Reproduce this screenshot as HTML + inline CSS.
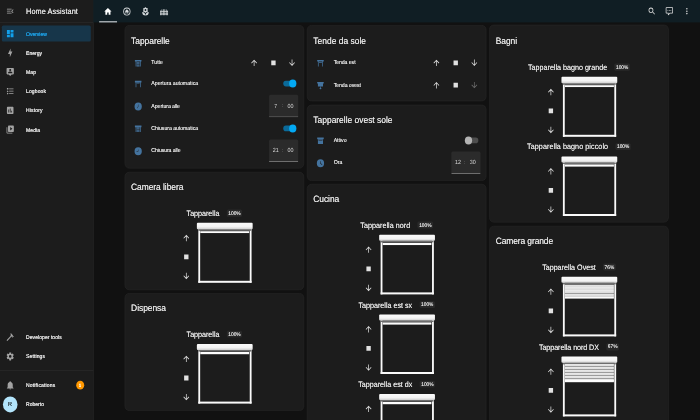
<!DOCTYPE html>
<html lang="it"><head><meta charset="utf-8"><title>Home Assistant</title>
<style>
html,body{margin:0;padding:0;background:#111111;overflow:hidden;width:700px;height:420px}
#c{position:absolute;left:0;top:0;width:1920px;height:1050px;transform-origin:0 0;transform:scale(0.3645833,0.4);overflow:hidden;filter:brightness(1);
 font-family:"Liberation Sans",sans-serif;text-rendering:geometricPrecision;}
#c>*{position:absolute;box-sizing:border-box}
.ic{display:block}
.t{white-space:nowrap;text-shadow:0 0 1px currentColor}
.thin{text-shadow:none}
.med{-webkit-text-stroke:0.25px currentColor}
.sidebar{left:0;top:0;width:256px;height:1050px;background:rgba(28,28,28,.996);border-right:1px solid #363636}
.sb-head{left:0;top:0;width:255px;height:56px;border-bottom:1px solid #363636}
.sel{background:rgba(23,54,74,.996);border-radius:4px}
.divider{height:1px;background:#363636}
.badge{border-radius:50%;background:#ff9800}
.avatar{border-radius:50%;background:#b3e5fc}
.header{left:256px;top:0;width:1664px;height:56px;background:rgba(16,30,36,.996)}
.ind{background:#c4c9cc}
.card{background:rgba(28,28,28,.996);border:1px solid #313131;border-radius:12px}
.track{width:34px;height:14px;border-radius:7px;background:#4d4d4d}
.track.on{background:#0b6a99}
.thumb{width:20px;height:20px;border-radius:50%;background:#b4b4b4}
.thumb.on{background:#03a9f4}
.timebox{width:80px;height:56px;background:rgba(255,255,255,.065);border-bottom:2.5px solid #a0a0a0;border-radius:4px 4px 0 0}
.lblrow{text-shadow:0 0 0.5px currentColor;height:40px;line-height:40px;text-align:center;white-space:nowrap;color:#e1e1e1;font-size:19.6px}
.lbl{display:inline-block;vertical-align:middle;line-height:40px}
.pct{display:inline-block;vertical-align:middle;margin-left:20px;font-size:13.2px;line-height:17.5px;height:17.5px;padding:0 4.3px;background:rgba(255,255,255,.06);border-radius:4px;color:#e1e1e1;position:relative;top:-1px}
.pic{width:153px;height:151px}
.pic>*{position:absolute;box-sizing:border-box}
.bar{left:0;top:0;width:153px;height:15.5px;border-radius:2.5px;background:linear-gradient(#fbfbfb 0,#f4f4f4 62%,#cfcfcf 100%)}
.shade{left:4px;top:15px;width:145px;height:4.5px;background:#6e6e6e}
.frame{left:3.6px;top:14px;width:146px;height:135.5px;border:5.2px solid #fafafa;border-bottom-width:5.8px;border-top:0}
.slide{left:9px;top:19px;width:135px;overflow:hidden}
.slats{position:absolute;left:0;top:0;width:135px;background:repeating-linear-gradient(#e9e9e9 0,#dcdcdc 5.6px,#9c9c9c 5.6px,#9c9c9c 7.6px)}
.handle{position:absolute;left:0;bottom:0;width:135px;height:5.5px;background:#fcfcfc}
</style></head>
<body><div id="c">
<div class="sidebar"></div>
<div class="sb-head"></div>
<svg class="ic" style="left:16.0px;top:16.0px;width:24px;height:24px;" viewBox="0 0 24 24"><path fill="#a8a8a8" d="M21,15.61L19.59,17L14.58,12L19.59,7L21,8.39L17.44,12L21,15.61M3,6H16V8H3V6M3,13V11H13V13H3M3,18V16H16V18H3Z"/></svg>
<div class="t " style="left:71.5px;top:8.5px;height:40px;line-height:40px;font-size:20.2px;color:#e1e1e1;letter-spacing:0.14px;text-shadow:0 0 0.5px currentColor;">Home Assistant</div>
<div class="sel" style="left:5px;top:64px;width:244px;height:40px"></div>
<svg class="ic" style="left:16.0px;top:72.0px;width:24px;height:24px;" viewBox="0 0 24 24"><path fill="#12a0ea" d="M13,3V9H21V3M13,21H21V11H13M3,21H11V15H3M3,13H11V3H3V13Z"/></svg>
<div class="t med" style="left:71.5px;top:70.5px;height:28px;line-height:28px;font-size:13.8px;color:#1ea1e6;letter-spacing:-0.09px;">Overview</div>
<svg class="ic" style="left:16.0px;top:120.0px;width:24px;height:24px;" viewBox="0 0 24 24"><path fill="#a3a3a3" d="M11,15H6L13,1V9H18L11,23V15Z"/></svg>
<div class="t med" style="left:71.5px;top:118.5px;height:28px;line-height:28px;font-size:13.8px;color:#e1e1e1;letter-spacing:-0.04px;">Energy</div>
<svg class="ic" style="left:16.0px;top:168.0px;width:24px;height:24px;" viewBox="0 0 24 24"><path fill="#a3a3a3" d="M20,2H4A2,2 0 0,0 2,4V16A2,2 0 0,0 4,18H8L12,22L16,18H20A2,2 0 0,0 22,16V4A2,2 0 0,0 20,2M12,4.3C13.5,4.3 14.7,5.5 14.7,7C14.7,8.5 13.5,9.7 12,9.7C10.5,9.7 9.3,8.5 9.3,7C9.3,5.5 10.5,4.3 12,4.3M18,15H6V14.1C6,12.1 10,11 12,11C14,11 18,12.1 18,14.1V15Z"/></svg>
<div class="t med" style="left:71.5px;top:166.5px;height:28px;line-height:28px;font-size:13.8px;color:#e1e1e1;letter-spacing:0.18px;">Map</div>
<svg class="ic" style="left:16.0px;top:216.0px;width:24px;height:24px;" viewBox="0 0 24 24"><path fill="#a3a3a3" d="M5,9.5L7.5,14H2.5L5,9.5M3,4H7V8H3V4M5,20A2,2 0 0,0 7,18A2,2 0 0,0 5,16A2,2 0 0,0 3,18A2,2 0 0,0 5,20M9,5V7H21V5H9M9,19H21V17H9V19M9,13H21V11H9V13Z"/></svg>
<div class="t med" style="left:71.5px;top:214.5px;height:28px;line-height:28px;font-size:13.8px;color:#e1e1e1;letter-spacing:0.28px;">Logbook</div>
<svg class="ic" style="left:16.0px;top:264.0px;width:24px;height:24px;" viewBox="0 0 24 24"><path fill="#a3a3a3" d="M17,17H15V13H17M13,17H11V7H13M9,17H7V10H9M19,3H5C3.89,3 3,3.89 3,5V19A2,2 0 0,0 5,21H19A2,2 0 0,0 21,19V5C21,3.89 20.1,3 19,3Z"/></svg>
<div class="t med" style="left:71.5px;top:262.5px;height:28px;line-height:28px;font-size:13.8px;color:#e1e1e1;letter-spacing:0.34px;">History</div>
<svg class="ic" style="left:16.0px;top:312.0px;width:24px;height:24px;" viewBox="0 0 24 24"><path fill="#a3a3a3" d="M4,6H2V20A2,2 0 0,0 4,22H18V20H4V6M20,2H8A2,2 0 0,0 6,4V16A2,2 0 0,0 8,18H20A2,2 0 0,0 22,16V4A2,2 0 0,0 20,2M12,14.5V5.5L18,10L12,14.5Z"/></svg>
<div class="t med" style="left:71.5px;top:310.5px;height:28px;line-height:28px;font-size:13.8px;color:#e1e1e1;letter-spacing:0.16px;">Media</div>
<svg class="ic" style="left:16.0px;top:830.5px;width:24px;height:24px;" viewBox="0 0 24 24"><path fill="#a3a3a3" d="M2,19.63L13.43,8.2L12.72,7.5L14.14,6.07L12,3.89C13.2,2.7 15.09,2.7 16.27,3.89L19.87,7.5L18.45,8.91H21.29L22,9.62L18.45,13.21L17.74,12.5V9.62L16.27,11.04L15.56,10.33L4.13,21.76L2,19.63Z"/></svg>
<div class="t med" style="left:71.5px;top:829.0px;height:28px;line-height:28px;font-size:13.8px;color:#e1e1e1;letter-spacing:0.14px;">Developer tools</div>
<svg class="ic" style="left:16.0px;top:878.5px;width:24px;height:24px;" viewBox="0 0 24 24"><path fill="#a3a3a3" d="M12,15.5A3.5,3.5 0 0,1 8.5,12A3.5,3.5 0 0,1 12,8.5A3.5,3.5 0 0,1 15.5,12A3.5,3.5 0 0,1 12,15.5M19.43,12.97C19.47,12.65 19.5,12.33 19.5,12C19.5,11.67 19.47,11.34 19.43,11L21.54,9.37C21.73,9.22 21.78,8.95 21.66,8.73L19.66,5.27C19.54,5.05 19.27,4.96 19.05,5.05L16.56,6.05C16.04,5.66 15.5,5.32 14.87,5.07L14.5,2.42C14.46,2.18 14.25,2 14,2H10C9.75,2 9.54,2.18 9.5,2.42L9.13,5.07C8.5,5.32 7.96,5.66 7.44,6.05L4.95,5.05C4.73,4.96 4.46,5.05 4.34,5.27L2.34,8.73C2.21,8.95 2.27,9.22 2.46,9.37L4.57,11C4.53,11.34 4.5,11.67 4.5,12C4.5,12.33 4.53,12.65 4.57,12.97L2.46,14.63C2.27,14.78 2.21,15.05 2.34,15.27L4.34,18.73C4.46,18.95 4.73,19.03 4.95,18.95L7.44,17.94C7.96,18.34 8.5,18.68 9.13,18.93L9.5,21.58C9.54,21.82 9.75,22 10,22H14C14.25,22 14.46,21.82 14.5,21.58L14.87,18.93C15.5,18.67 16.04,18.34 16.56,17.94L19.05,18.95C19.27,19.03 19.54,18.95 19.66,18.73L21.66,15.27C21.78,15.05 21.73,14.78 21.54,14.63L19.43,12.97Z"/></svg>
<div class="t med" style="left:71.5px;top:877.0px;height:28px;line-height:28px;font-size:13.8px;color:#e1e1e1;letter-spacing:0.28px;">Settings</div>
<svg class="ic" style="left:16.0px;top:951.3px;width:24px;height:24px;" viewBox="0 0 24 24"><path fill="#a3a3a3" d="M21,19V20H3V19L5,17V11C5,7.9 7.03,5.17 10,4.29C10,4.19 10,4.1 10,4A2,2 0 0,1 12,2A2,2 0 0,1 14,4C14,4.1 14,4.19 14,4.29C16.97,5.17 19,7.9 19,11V17L21,19M14,21A2,2 0 0,1 12,23A2,2 0 0,1 10,21"/></svg>
<div class="t med" style="left:71.5px;top:949.8px;height:28px;line-height:28px;font-size:13.8px;color:#e1e1e1;letter-spacing:0.39px;">Notifications</div>
<div class="divider" style="left:0;top:926px;width:256px"></div>
<div class="badge" style="left:208.5px;top:952.3px;width:22px;height:22px;"></div>
<div class="t med" style="left:-80.5px;width:600px;text-align:center;top:951.5px;height:24px;line-height:24px;font-size:12px;color:#fff;">1</div>
<div class="avatar" style="left:7.5px;top:991px;width:40px;height:40px"></div>
<div class="t " style="left:-272.5px;width:600px;text-align:center;top:996.5px;height:30px;line-height:30px;font-size:15px;color:#2b3a42;">R</div>
<div class="t med" style="left:71.5px;top:997.5px;height:28px;line-height:28px;font-size:13.8px;color:#e1e1e1;letter-spacing:-0.01px;">Roberto</div>
<div class="header"></div>
<svg class="ic" style="left:283.7px;top:16.5px;width:24px;height:24px;" viewBox="0 0 24 24"><path fill="#ffffff" d="M10,20V14H14V20H19V12H22L12,3L2,12H5V20H10Z"/></svg>
<svg class="ic" style="left:335.5px;top:16.5px;width:24px;height:24px;" viewBox="0 0 24 24"><path fill="#d4d8da" d="M12,2A10,10 0 1,0 12,22A10,10 0 1,0 12,2M12,4.2A7.8,7.8 0 1,1 12,19.8A7.8,7.8 0 1,1 12,4.2M12,6L6,11.5H8V16.5H11V13H13V16.5H16V11.5H18L12,6Z"/></svg>
<svg class="ic" style="left:386.8px;top:16.5px;width:24px;height:24px;" viewBox="0 0 24 24"><path fill="#d4d8da" d="M3,13A9,9 0 0,0 12,22C12,17 7.97,13 3,13M12,5.5A2.5,2.5 0 0,1 14.5,8A2.5,2.5 0 0,1 12,10.5A2.5,2.5 0 0,1 9.5,8A2.5,2.5 0 0,1 12,5.5M5.6,10.25A2.5,2.5 0 0,0 8.1,12.75C8.63,12.75 9.12,12.58 9.5,12.3C9.5,12.37 9.5,12.43 9.5,12.5A2.5,2.5 0 0,0 12,15A2.5,2.5 0 0,0 14.5,12.5C14.5,12.43 14.5,12.37 14.5,12.3C14.88,12.58 15.37,12.75 15.9,12.75C17.28,12.75 18.4,11.63 18.4,10.25C18.4,9.25 17.81,8.4 16.97,8C17.81,7.6 18.4,6.74 18.4,5.75C18.4,4.37 17.28,3.25 15.9,3.25C15.37,3.25 14.88,3.41 14.5,3.7C14.5,3.63 14.5,3.56 14.5,3.5A2.5,2.5 0 0,0 12,1A2.5,2.5 0 0,0 9.5,3.5C9.5,3.56 9.5,3.63 9.5,3.7C9.12,3.41 8.63,3.25 8.1,3.25A2.5,2.5 0 0,0 5.6,5.75C5.6,6.74 6.19,7.6 7.03,8C6.19,8.4 5.6,9.25 5.6,10.25M12,22A9,9 0 0,0 21,13C16,13 12,17 12,22Z"/></svg>
<svg class="ic" style="left:437.6px;top:16.5px;width:24px;height:24px;" viewBox="0 0 24 24"><path fill="#d4d8da" d="M9 6V11H7V7H5V11H3V9H1V21H3V19H5V21H7V19H9V21H11V19H13V21H15V19H17V21H19V19H21V21H23V9H21V11H19V7H17V11H15V6H13V11H11V6H9M3 13H5V17H3V13M7 13H9V17H7V13M11 13H13V17H11V13M15 13H17V17H15V13M19 13H21V17H19V13Z"/></svg>
<div class="ind" style="left:271.5px;top:53px;width:49px;height:3px"></div>
<svg class="ic" style="left:1775.7px;top:16.0px;width:24px;height:24px;" viewBox="0 0 24 24"><path fill="#e1e1e1" d="M9.5,3A6.5,6.5 0 0,1 16,9.5C16,11.11 15.41,12.59 14.44,13.73L14.71,14H15.5L20.5,19L19,20.5L14,15.5V14.71L13.73,14.44C12.59,15.41 11.11,16 9.5,16A6.5,6.5 0 0,1 3,9.5A6.5,6.5 0 0,1 9.5,3M9.5,5C7,5 5,7 5,9.5C5,12 7,14 9.5,14C12,14 14,12 14,9.5C14,7 12,5 9.5,5Z"/></svg>
<svg class="ic" style="left:1823.7px;top:16.0px;width:24px;height:24px;" viewBox="0 0 24 24"><path fill="#e1e1e1" d="M9,22A1,1 0 0,1 8,21V18H4A2,2 0 0,1 2,16V4C2,2.89 2.9,2 4,2H20A2,2 0 0,1 22,4V16A2,2 0 0,1 20,18H13.9L10.2,21.71C10,21.9 9.75,22 9.5,22H9M10,16V19.08L13.08,16H20V4H4V16H10M17,11H15V9H17V11M13,11H11V9H13V11M9,11H7V9H9V11Z"/></svg>
<svg class="ic" style="left:1872.3px;top:16.0px;width:24px;height:24px;" viewBox="0 0 24 24"><path fill="#e1e1e1" d="M12,16A2,2 0 0,1 14,18A2,2 0 0,1 12,20A2,2 0 0,1 10,18A2,2 0 0,1 12,16M12,10A2,2 0 0,1 14,12A2,2 0 0,1 12,14A2,2 0 0,1 10,12A2,2 0 0,1 12,10M12,4A2,2 0 0,1 14,6A2,2 0 0,1 12,8A2,2 0 0,1 10,6A2,2 0 0,1 12,4Z"/></svg>
<div class="card" style="left:342px;top:62.5px;width:492px;height:358.8px"></div>
<div class="t " style="left:359.5px;top:78.5px;height:46px;line-height:46px;font-size:23.2px;color:#e1e1e1;letter-spacing:-0.12px;text-shadow:0 0 0.5px currentColor;">Tapparelle</div>
<svg class="ic" style="left:367.0px;top:146.3px;width:24px;height:24px;" viewBox="0 0 24 24"><path fill="#44739e" d="M3 4H21V8H19V20H17V8H7V20H5V8H3V4M8 9H16V11H8V9M8 12H16V14H8V12M8 15H16V17H8V15M8 18H16V20H8V18Z"/></svg>
<div class="t " style="left:415.2px;top:143.1px;height:28px;line-height:28px;font-size:14.2px;color:#e1e1e1;letter-spacing:-0.11px;">Tutte</div>
<svg class="ic" style="left:685.4px;top:145.3px;width:24px;height:24px;" viewBox="0 0 24 24"><path fill="#e1e1e1" d="M13,20H11V8L5.5,13.5L4.08,12.08L12,4.16L19.92,12.08L18.5,13.5L13,8V20Z"/></svg>
<svg class="ic" style="left:737.8px;top:145.3px;width:24px;height:24px;" viewBox="0 0 24 24"><path fill="#e1e1e1" d="M18,18H6V6H18V18Z"/></svg>
<svg class="ic" style="left:788.6px;top:145.3px;width:24px;height:24px;" viewBox="0 0 24 24"><path fill="#e1e1e1" d="M11,4H13V16L18.5,10.5L19.92,11.92L12,19.84L4.08,11.92L5.5,10.5L11,16V4Z"/></svg>
<svg class="ic" style="left:367.0px;top:198.3px;width:24px;height:24px;" viewBox="0 0 24 24"><path fill="#44739e" d="M3 4H21V8H19V20H17V8H7V20H5V8H3V4M8 9H16V11H8V9Z"/></svg>
<div class="t " style="left:415.2px;top:195.1px;height:28px;line-height:28px;font-size:14.2px;color:#e1e1e1;letter-spacing:0.03px;">Apertura automatica</div>
<div class="track on" style="left:777.0px;top:202.3px"></div>
<div class="thumb on" style="left:793.2px;top:199.3px"></div>
<svg class="ic" style="left:367.0px;top:254.3px;width:24px;height:24px;" viewBox="0 0 24 24"><path fill="#44739e" d="M12,2A10,10 0 0,0 2,12A10,10 0 0,0 12,22A10,10 0 0,0 22,12A10,10 0 0,0 12,2M12.4,12.6L10.2,16.4L9.3,15.9L11.4,12.3V7.5H12.4V12.6Z"/></svg>
<div class="t " style="left:415.2px;top:251.1px;height:28px;line-height:28px;font-size:14.2px;color:#e1e1e1;letter-spacing:-0.16px;">Apertura alle</div>
<div class="timebox" style="left:738.0px;top:237.3px"></div>
<div class="t thin" style="left:456.3px;width:600px;text-align:center;top:249.5px;height:30px;line-height:30px;font-size:14.8px;color:#d6d6d6;">7</div>
<div class="t thin" style="left:475.0px;width:600px;text-align:center;top:249.1px;height:30px;line-height:30px;font-size:14.8px;color:#8a8a8a;">:</div>
<div class="t thin" style="left:497.0px;width:600px;text-align:center;top:249.5px;height:30px;line-height:30px;font-size:14.8px;color:#d6d6d6;">00</div>
<svg class="ic" style="left:367.0px;top:310.3px;width:24px;height:24px;" viewBox="0 0 24 24"><path fill="#44739e" d="M3 4H21V8H19V20H17V8H7V20H5V8H3V4M8 9H16V11H8V9M8 12H16V14H8V12M8 15H16V17H8V15M8 18H16V20H8V18Z"/></svg>
<div class="t " style="left:415.2px;top:307.1px;height:28px;line-height:28px;font-size:14.2px;color:#e1e1e1;letter-spacing:-0.10px;">Chiusura automatica</div>
<div class="track on" style="left:777.0px;top:314.3px"></div>
<div class="thumb on" style="left:793.2px;top:311.3px"></div>
<svg class="ic" style="left:367.0px;top:366.3px;width:24px;height:24px;" viewBox="0 0 24 24"><path fill="#44739e" d="M12,2A10,10 0 0,0 2,12A10,10 0 0,0 12,22A10,10 0 0,0 22,12A10,10 0 0,0 12,2M12.4,12.5H7.5V11.5H11.4V7.5H12.4V12.5Z"/></svg>
<div class="t " style="left:415.2px;top:363.1px;height:28px;line-height:28px;font-size:14.2px;color:#e1e1e1;letter-spacing:-0.23px;">Chiusura alle</div>
<div class="timebox" style="left:738.0px;top:349.3px"></div>
<div class="t thin" style="left:456.3px;width:600px;text-align:center;top:361.5px;height:30px;line-height:30px;font-size:14.8px;color:#d6d6d6;">21</div>
<div class="t thin" style="left:475.0px;width:600px;text-align:center;top:361.1px;height:30px;line-height:30px;font-size:14.8px;color:#8a8a8a;">:</div>
<div class="t thin" style="left:497.0px;width:600px;text-align:center;top:361.5px;height:30px;line-height:30px;font-size:14.8px;color:#d6d6d6;">00</div>
<div class="card" style="left:342px;top:430.3px;width:492px;height:294.7px"></div>
<div class="t " style="left:359.5px;top:443.0px;height:46px;line-height:46px;font-size:23.2px;color:#e1e1e1;letter-spacing:-0.17px;text-shadow:0 0 0.5px currentColor;">Camera libera</div>
<div class="lblrow" style="left:342px;width:492px;top:513.3px"><span class="lbl" style="letter-spacing:-0.02px;">Tapparella</span><span class="pct">100%</span></div>
<div class="pic" style="left:540.0px;top:557.3px"><div class="frame"></div><div class="shade"></div><div class="slide" style="height:7.0px"><div class="handle"></div></div><div class="bar"></div></div>
<svg class="ic" style="left:499.3px;top:582.8px;width:24px;height:24px;" viewBox="0 0 24 24"><path fill="#e1e1e1" d="M13,20H11V8L5.5,13.5L4.08,12.08L12,4.16L19.92,12.08L18.5,13.5L13,8V20Z"/></svg>
<svg class="ic" style="left:499.3px;top:630.3px;width:24px;height:24px;" viewBox="0 0 24 24"><path fill="#e1e1e1" d="M18,18H6V6H18V18Z"/></svg>
<svg class="ic" style="left:499.3px;top:678.3px;width:24px;height:24px;" viewBox="0 0 24 24"><path fill="#e1e1e1" d="M11,4H13V16L18.5,10.5L19.92,11.92L12,19.84L4.08,11.92L5.5,10.5L11,16V4Z"/></svg>
<div class="card" style="left:342px;top:733.3px;width:492px;height:293.7px"></div>
<div class="t " style="left:359.5px;top:746.3px;height:46px;line-height:46px;font-size:23.2px;color:#e1e1e1;letter-spacing:-0.13px;text-shadow:0 0 0.5px currentColor;">Dispensa</div>
<div class="lblrow" style="left:342px;width:492px;top:815.8px"><span class="lbl" style="letter-spacing:-0.02px;">Tapparella</span><span class="pct">100%</span></div>
<div class="pic" style="left:540.0px;top:859.8px"><div class="frame"></div><div class="shade"></div><div class="slide" style="height:7.0px"><div class="handle"></div></div><div class="bar"></div></div>
<svg class="ic" style="left:499.3px;top:885.3px;width:24px;height:24px;" viewBox="0 0 24 24"><path fill="#e1e1e1" d="M13,20H11V8L5.5,13.5L4.08,12.08L12,4.16L19.92,12.08L18.5,13.5L13,8V20Z"/></svg>
<svg class="ic" style="left:499.3px;top:932.8px;width:24px;height:24px;" viewBox="0 0 24 24"><path fill="#e1e1e1" d="M18,18H6V6H18V18Z"/></svg>
<svg class="ic" style="left:499.3px;top:980.8px;width:24px;height:24px;" viewBox="0 0 24 24"><path fill="#e1e1e1" d="M11,4H13V16L18.5,10.5L19.92,11.92L12,19.84L4.08,11.92L5.5,10.5L11,16V4Z"/></svg>
<div class="card" style="left:842px;top:62.5px;width:492px;height:190.8px"></div>
<div class="t " style="left:859.5px;top:78.5px;height:46px;line-height:46px;font-size:23.2px;color:#e1e1e1;letter-spacing:0.00px;text-shadow:0 0 0.5px currentColor;">Tende da sole</div>
<svg class="ic" style="left:867.0px;top:146.3px;width:24px;height:24px;" viewBox="0 0 24 24"><path fill="#44739e" d="M3 4H21V8H19V20H17V8H7V20H5V8H3V4M8 9H16V11H8V9Z"/></svg>
<div class="t " style="left:915.2px;top:143.1px;height:28px;line-height:28px;font-size:14.2px;color:#e1e1e1;letter-spacing:-0.18px;">Tenda est</div>
<svg class="ic" style="left:1185.4px;top:145.3px;width:24px;height:24px;" viewBox="0 0 24 24"><path fill="#e1e1e1" d="M13,20H11V8L5.5,13.5L4.08,12.08L12,4.16L19.92,12.08L18.5,13.5L13,8V20Z"/></svg>
<svg class="ic" style="left:1237.8px;top:145.3px;width:24px;height:24px;" viewBox="0 0 24 24"><path fill="#e1e1e1" d="M18,18H6V6H18V18Z"/></svg>
<svg class="ic" style="left:1288.6px;top:145.3px;width:24px;height:24px;" viewBox="0 0 24 24"><path fill="#e1e1e1" d="M11,4H13V16L18.5,10.5L19.92,11.92L12,19.84L4.08,11.92L5.5,10.5L11,16V4Z"/></svg>
<svg class="ic" style="left:867.0px;top:202.0px;width:24px;height:24px;" viewBox="0 0 24 24"><path fill="#44739e" d="M3,3H21V7H19V14H5V7H3V3M11,15H13V18H15.5L12,21.5L8.5,18H11V15Z"/></svg>
<div class="t " style="left:915.2px;top:198.8px;height:28px;line-height:28px;font-size:14.2px;color:#e1e1e1;letter-spacing:-0.16px;">Tenda ovest</div>
<svg class="ic" style="left:1185.4px;top:201.0px;width:24px;height:24px;" viewBox="0 0 24 24"><path fill="#e1e1e1" d="M13,20H11V8L5.5,13.5L4.08,12.08L12,4.16L19.92,12.08L18.5,13.5L13,8V20Z"/></svg>
<svg class="ic" style="left:1237.8px;top:201.0px;width:24px;height:24px;" viewBox="0 0 24 24"><path fill="#e1e1e1" d="M18,18H6V6H18V18Z"/></svg>
<svg class="ic" style="left:1288.6px;top:201.0px;width:24px;height:24px;" viewBox="0 0 24 24"><path fill="#6b6b6b" d="M11,4H13V16L18.5,10.5L19.92,11.92L12,19.84L4.08,11.92L5.5,10.5L11,16V4Z"/></svg>
<div class="card" style="left:842px;top:261.5px;width:492px;height:190.3px"></div>
<div class="t " style="left:859.5px;top:276.5px;height:46px;line-height:46px;font-size:23.2px;color:#e1e1e1;letter-spacing:-0.04px;text-shadow:0 0 0.5px currentColor;">Tapparelle ovest sole</div>
<svg class="ic" style="left:867.0px;top:340.3px;width:24px;height:24px;" viewBox="0 0 24 24"><path fill="#44739e" d="M3,4H21V8H3V4M5,9H19V20H5V9M6.5,10.5V11.7H17.5V10.5H6.5Z"/></svg>
<div class="t " style="left:915.2px;top:337.1px;height:28px;line-height:28px;font-size:14.2px;color:#e1e1e1;letter-spacing:-0.04px;">Attivo</div>
<div class="track" style="left:1278.0px;top:344.3px"></div>
<div class="thumb" style="left:1275.4px;top:341.3px"></div>
<svg class="ic" style="left:867.0px;top:396.0px;width:24px;height:24px;" viewBox="0 0 24 24"><path fill="#44739e" d="M12,2A10,10 0 0,0 2,12A10,10 0 0,0 12,22A10,10 0 0,0 22,12A10,10 0 0,0 12,2M16.2,16.2L11,13V7H12.5V12.2L17,14.9L16.2,16.2Z"/></svg>
<div class="t " style="left:915.2px;top:392.8px;height:28px;line-height:28px;font-size:14.2px;color:#e1e1e1;">Ora</div>
<div class="timebox" style="left:1238.0px;top:379.0px"></div>
<div class="t thin" style="left:956.3px;width:600px;text-align:center;top:391.2px;height:30px;line-height:30px;font-size:14.8px;color:#d6d6d6;">12</div>
<div class="t thin" style="left:975.0px;width:600px;text-align:center;top:390.8px;height:30px;line-height:30px;font-size:14.8px;color:#8a8a8a;">:</div>
<div class="t thin" style="left:997.0px;width:600px;text-align:center;top:391.2px;height:30px;line-height:30px;font-size:14.8px;color:#d6d6d6;">30</div>
<div class="card" style="left:842px;top:460.0px;width:492px;height:640.0px"></div>
<div class="t " style="left:859.5px;top:473.0px;height:46px;line-height:46px;font-size:23.2px;color:#e1e1e1;letter-spacing:-0.27px;text-shadow:0 0 0.5px currentColor;">Cucina</div>
<div class="lblrow" style="left:842px;width:492px;top:542.8px"><span class="lbl" style="letter-spacing:0.13px;">Tapparella nord</span><span class="pct">100%</span></div>
<div class="pic" style="left:1040.0px;top:586.8px"><div class="frame"></div><div class="shade"></div><div class="slide" style="height:7.0px"><div class="handle"></div></div><div class="bar"></div></div>
<svg class="ic" style="left:999.3px;top:612.3px;width:24px;height:24px;" viewBox="0 0 24 24"><path fill="#e1e1e1" d="M13,20H11V8L5.5,13.5L4.08,12.08L12,4.16L19.92,12.08L18.5,13.5L13,8V20Z"/></svg>
<svg class="ic" style="left:999.3px;top:659.8px;width:24px;height:24px;" viewBox="0 0 24 24"><path fill="#e1e1e1" d="M18,18H6V6H18V18Z"/></svg>
<svg class="ic" style="left:999.3px;top:707.8px;width:24px;height:24px;" viewBox="0 0 24 24"><path fill="#e1e1e1" d="M11,4H13V16L18.5,10.5L19.92,11.92L12,19.84L4.08,11.92L5.5,10.5L11,16V4Z"/></svg>
<div class="lblrow" style="left:842px;width:492px;top:741.9px"><span class="lbl" style="letter-spacing:0.03px;">Tapparella est sx</span><span class="pct">100%</span></div>
<div class="pic" style="left:1040.0px;top:785.9px"><div class="frame"></div><div class="shade"></div><div class="slide" style="height:7.0px"><div class="handle"></div></div><div class="bar"></div></div>
<svg class="ic" style="left:999.3px;top:811.4px;width:24px;height:24px;" viewBox="0 0 24 24"><path fill="#e1e1e1" d="M13,20H11V8L5.5,13.5L4.08,12.08L12,4.16L19.92,12.08L18.5,13.5L13,8V20Z"/></svg>
<svg class="ic" style="left:999.3px;top:858.9px;width:24px;height:24px;" viewBox="0 0 24 24"><path fill="#e1e1e1" d="M18,18H6V6H18V18Z"/></svg>
<svg class="ic" style="left:999.3px;top:906.9px;width:24px;height:24px;" viewBox="0 0 24 24"><path fill="#e1e1e1" d="M11,4H13V16L18.5,10.5L19.92,11.92L12,19.84L4.08,11.92L5.5,10.5L11,16V4Z"/></svg>
<div class="lblrow" style="left:842px;width:492px;top:940.6px"><span class="lbl" style="letter-spacing:0.02px;">Tapparella est dx</span><span class="pct">100%</span></div>
<div class="pic" style="left:1040.0px;top:984.6px"><div class="frame"></div><div class="shade"></div><div class="slide" style="height:7.0px"><div class="handle"></div></div><div class="bar"></div></div>
<svg class="ic" style="left:999.3px;top:1010.1px;width:24px;height:24px;" viewBox="0 0 24 24"><path fill="#e1e1e1" d="M13,20H11V8L5.5,13.5L4.08,12.08L12,4.16L19.92,12.08L18.5,13.5L13,8V20Z"/></svg>
<svg class="ic" style="left:999.3px;top:1057.6px;width:24px;height:24px;" viewBox="0 0 24 24"><path fill="#e1e1e1" d="M18,18H6V6H18V18Z"/></svg>
<svg class="ic" style="left:999.3px;top:1105.6px;width:24px;height:24px;" viewBox="0 0 24 24"><path fill="#e1e1e1" d="M11,4H13V16L18.5,10.5L19.92,11.92L12,19.84L4.08,11.92L5.5,10.5L11,16V4Z"/></svg>
<div class="card" style="left:1342px;top:62.0px;width:492px;height:494.0px"></div>
<div class="t " style="left:1359.5px;top:78.5px;height:46px;line-height:46px;font-size:23.2px;color:#e1e1e1;letter-spacing:-0.13px;text-shadow:0 0 0.5px currentColor;">Bagni</div>
<div class="lblrow" style="left:1342px;width:492px;top:148.0px"><span class="lbl" style="letter-spacing:0.01px;">Tapparella bagno grande</span><span class="pct">100%</span></div>
<div class="pic" style="left:1540.0px;top:192.0px"><div class="frame"></div><div class="shade"></div><div class="slide" style="height:7.0px"><div class="handle"></div></div><div class="bar"></div></div>
<svg class="ic" style="left:1499.3px;top:217.5px;width:24px;height:24px;" viewBox="0 0 24 24"><path fill="#e1e1e1" d="M13,20H11V8L5.5,13.5L4.08,12.08L12,4.16L19.92,12.08L18.5,13.5L13,8V20Z"/></svg>
<svg class="ic" style="left:1499.3px;top:265.0px;width:24px;height:24px;" viewBox="0 0 24 24"><path fill="#e1e1e1" d="M18,18H6V6H18V18Z"/></svg>
<svg class="ic" style="left:1499.3px;top:313.0px;width:24px;height:24px;" viewBox="0 0 24 24"><path fill="#e1e1e1" d="M11,4H13V16L18.5,10.5L19.92,11.92L12,19.84L4.08,11.92L5.5,10.5L11,16V4Z"/></svg>
<div class="lblrow" style="left:1342px;width:492px;top:346.5px"><span class="lbl" style="letter-spacing:0.23px;">Tapparella bagno piccolo</span><span class="pct">100%</span></div>
<div class="pic" style="left:1540.0px;top:390.5px"><div class="frame"></div><div class="shade"></div><div class="slide" style="height:7.0px"><div class="handle"></div></div><div class="bar"></div></div>
<svg class="ic" style="left:1499.3px;top:416.0px;width:24px;height:24px;" viewBox="0 0 24 24"><path fill="#e1e1e1" d="M13,20H11V8L5.5,13.5L4.08,12.08L12,4.16L19.92,12.08L18.5,13.5L13,8V20Z"/></svg>
<svg class="ic" style="left:1499.3px;top:463.5px;width:24px;height:24px;" viewBox="0 0 24 24"><path fill="#e1e1e1" d="M18,18H6V6H18V18Z"/></svg>
<svg class="ic" style="left:1499.3px;top:511.5px;width:24px;height:24px;" viewBox="0 0 24 24"><path fill="#e1e1e1" d="M11,4H13V16L18.5,10.5L19.92,11.92L12,19.84L4.08,11.92L5.5,10.5L11,16V4Z"/></svg>
<div class="card" style="left:1342px;top:565.0px;width:492px;height:535.0px"></div>
<div class="t " style="left:1359.5px;top:579.3px;height:46px;line-height:46px;font-size:23.2px;color:#e1e1e1;letter-spacing:-0.29px;text-shadow:0 0 0.5px currentColor;">Camera grande</div>
<div class="lblrow" style="left:1342px;width:492px;top:647.8px"><span class="lbl" style="letter-spacing:-0.00px;">Tapparella Ovest</span><span class="pct">76%</span></div>
<div class="pic" style="left:1540.0px;top:691.8px"><div class="frame"></div><div class="shade"></div><div class="slide" style="height:36.0px"><div class="slats" style="height:32.0px"></div><div class="handle"></div></div><div class="bar"></div></div>
<svg class="ic" style="left:1499.3px;top:717.3px;width:24px;height:24px;" viewBox="0 0 24 24"><path fill="#e1e1e1" d="M13,20H11V8L5.5,13.5L4.08,12.08L12,4.16L19.92,12.08L18.5,13.5L13,8V20Z"/></svg>
<svg class="ic" style="left:1499.3px;top:764.8px;width:24px;height:24px;" viewBox="0 0 24 24"><path fill="#e1e1e1" d="M18,18H6V6H18V18Z"/></svg>
<svg class="ic" style="left:1499.3px;top:812.8px;width:24px;height:24px;" viewBox="0 0 24 24"><path fill="#e1e1e1" d="M11,4H13V16L18.5,10.5L19.92,11.92L12,19.84L4.08,11.92L5.5,10.5L11,16V4Z"/></svg>
<div class="lblrow" style="left:1342px;width:492px;top:847.0px"><span class="lbl" style="letter-spacing:-0.18px;">Tapparella nord DX</span><span class="pct">67%</span></div>
<div class="pic" style="left:1540.0px;top:891.0px"><div class="frame"></div><div class="shade"></div><div class="slide" style="height:45.5px"><div class="slats" style="height:41.5px"></div><div class="handle"></div></div><div class="bar"></div></div>
<svg class="ic" style="left:1499.3px;top:916.5px;width:24px;height:24px;" viewBox="0 0 24 24"><path fill="#e1e1e1" d="M13,20H11V8L5.5,13.5L4.08,12.08L12,4.16L19.92,12.08L18.5,13.5L13,8V20Z"/></svg>
<svg class="ic" style="left:1499.3px;top:964.0px;width:24px;height:24px;" viewBox="0 0 24 24"><path fill="#e1e1e1" d="M18,18H6V6H18V18Z"/></svg>
<svg class="ic" style="left:1499.3px;top:1012.0px;width:24px;height:24px;" viewBox="0 0 24 24"><path fill="#e1e1e1" d="M11,4H13V16L18.5,10.5L19.92,11.92L12,19.84L4.08,11.92L5.5,10.5L11,16V4Z"/></svg>
</div></body></html>
